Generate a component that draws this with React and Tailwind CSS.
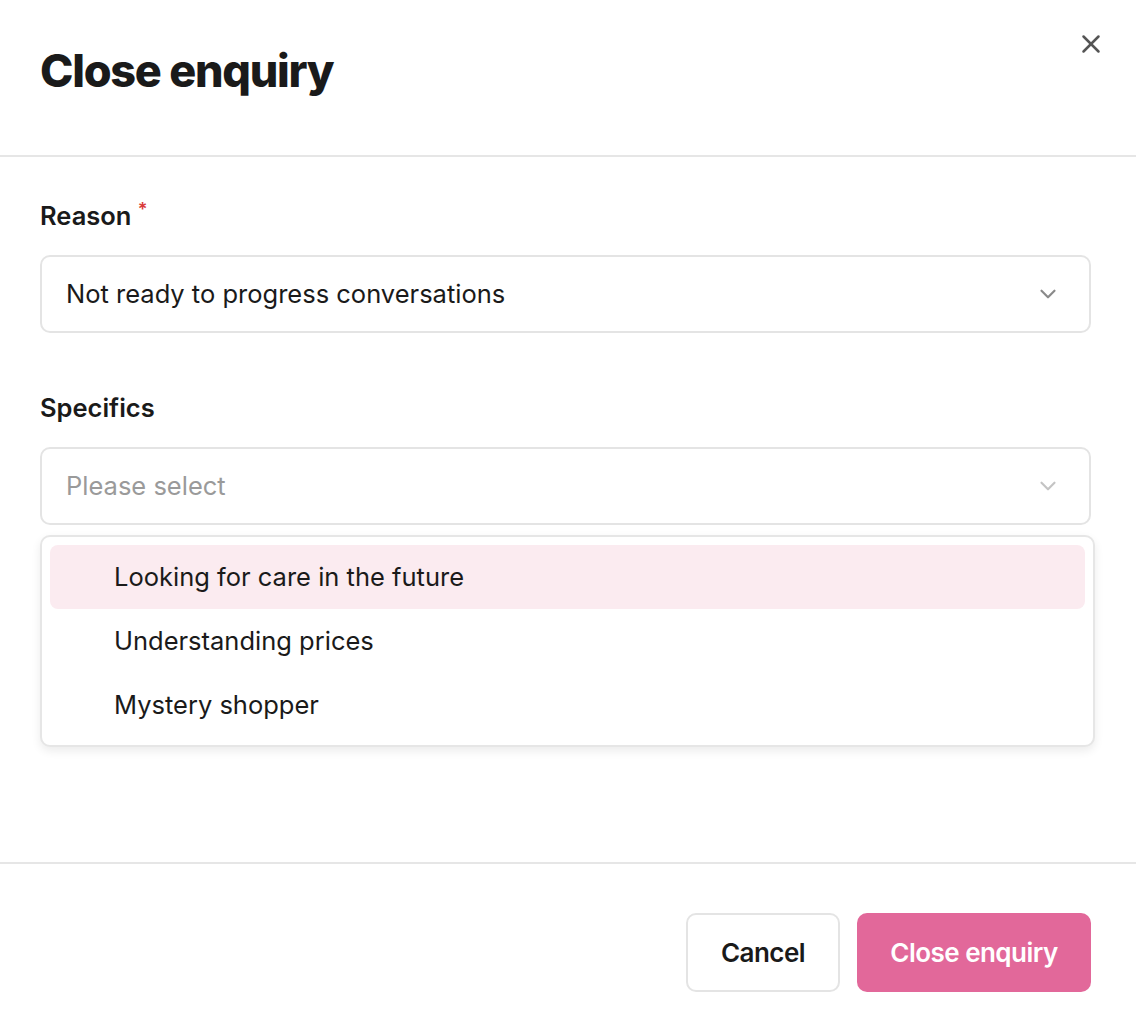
import { ChevronDown, X } from 'lucide-react';

const OPTIONS = ['Looking for care in the future', 'Understanding prices', 'Mystery shopper'];

function SelectBox({ value, placeholder, muted }) {
  return (
    <div className="h-[78px] rounded-[10px] border-2 border-[#e4e4e4] bg-white flex items-center justify-between pl-[24px] pr-[28px]">
      <span className={`text-[25.5px] ${value ? 'text-[#1a1a1a]' : 'text-[#9a9a9a]'}`}>{value || placeholder}</span>
      <ChevronDown className={`w-[26px] h-[26px] ${muted ? 'text-[#c4c4c4]' : 'text-[#8a8a8a]'}`} strokeWidth={2} />
    </div>
  );
}

export default function App() {
  return (
    <div className="w-[1136px] h-[1022px] bg-white text-[#1a1a1a]" style={{ fontFamily: 'Inter, "Noto Sans", sans-serif' }}>
      <div className="h-[157px] border-b-2 border-[#e6e6e6] flex items-start justify-between pl-10 pr-[30px]">
        <h1 className="text-[45px] font-extrabold tracking-[-0.028em] mt-[43px] leading-[56px]">Close enquiry</h1>
        <button className="mt-[29px] text-[#555]">
          <X className="w-[30px] h-[30px]" strokeWidth={2} />
        </button>
      </div>

      <div className="h-[705px] pl-10 pr-[45px]">
        <div className="pt-[43px]">
          <label className="block text-[25.5px] font-semibold leading-[32px]">
            Reason <span className="text-[#d93a3a] align-top text-[18px] leading-[20px]">*</span>
          </label>
          <div className="mt-[23px]">
            <SelectBox value="Not ready to progress conversations" />
          </div>
        </div>

        <div className="mt-[59px]">
          <label className="block text-[25.5px] font-semibold leading-[32px]">Specifics</label>
          <div className="mt-[23px] relative">
            <SelectBox placeholder="Please select" muted />
            <div className="absolute left-0 top-[88px] w-[1055px] rounded-[10px] border-2 border-[#e6e6e6] bg-white shadow-[0_4px_10px_rgba(0,0,0,0.08)] p-[8px] z-10">
              {OPTIONS.map((o, i) => (
                <div key={o} className={`h-[64px] flex items-center pl-[64px] text-[25.5px] rounded-[8px] ${i === 0 ? 'bg-[#fbebf0]' : ''}`}>
                  {o}
                </div>
              ))}
            </div>
          </div>
        </div>
      </div>

      <div className="border-t-2 border-[#e6e6e6] pt-[49px] pl-10 pr-[45px] flex justify-end gap-[17px]">
        <button className="h-[79px] w-[154px] rounded-[10px] border-2 border-[#e4e4e4] bg-white text-[26px] font-semibold tracking-[-0.02em]">
          Cancel
        </button>
        <button className="h-[79px] w-[234px] rounded-[10px] bg-[#e2689a] text-white text-[26px] font-semibold tracking-[-0.02em]">
          Close enquiry
        </button>
      </div>
    </div>
  );
}
